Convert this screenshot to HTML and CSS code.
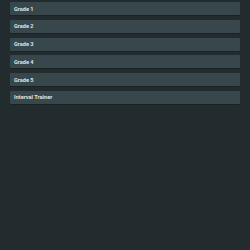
FILE: index.html
```html
<!DOCTYPE html>
<html lang="en">
  <head>
    <meta charset="UTF-8" />
    <meta name="viewport" content="width=device-width, initial-scale=1.0" />
    <title>Trainer</title>
    <link rel="stylesheet" href="styles.css">
  </head>
  <body>
    <div class="menu">
      <button class="menu-item">Grade 1</button>
      <button class="menu-item">Grade 2</button>
      <button class="menu-item">Grade 3</button>
      <button class="menu-item">Grade 4</button>
      <button class="menu-item">Grade 5</button>
      <button class="menu-item">Interval Trainer</button>
    </div>
  </body>
</html>
```

FILE: styles.css
```css
* {
  margin: 0;
  padding: 0;
  box-sizing: border-box;
}

html,
body {
  height: 100%;
}

body {
  font-family: Roboto, "Liberation Sans", sans-serif;
  background-color: #222c2e;
  color: #dfe3e4;
}

.menu {
  display: flex;
  flex-direction: column;
  gap: 4.8px;
  padding: 2px 10px 0 10px;
}

.menu-item {
  height: 13px;
  padding: 0 4px;
  border: none;
  border-radius: 1px;
  background-color: #37474b;
  box-shadow: 0 1px 0 #1a2224;
  color: #dfe3e4;
  font-family: inherit;
  font-size: 5.6px;
  font-weight: 700;
  text-align: left;
}
```
